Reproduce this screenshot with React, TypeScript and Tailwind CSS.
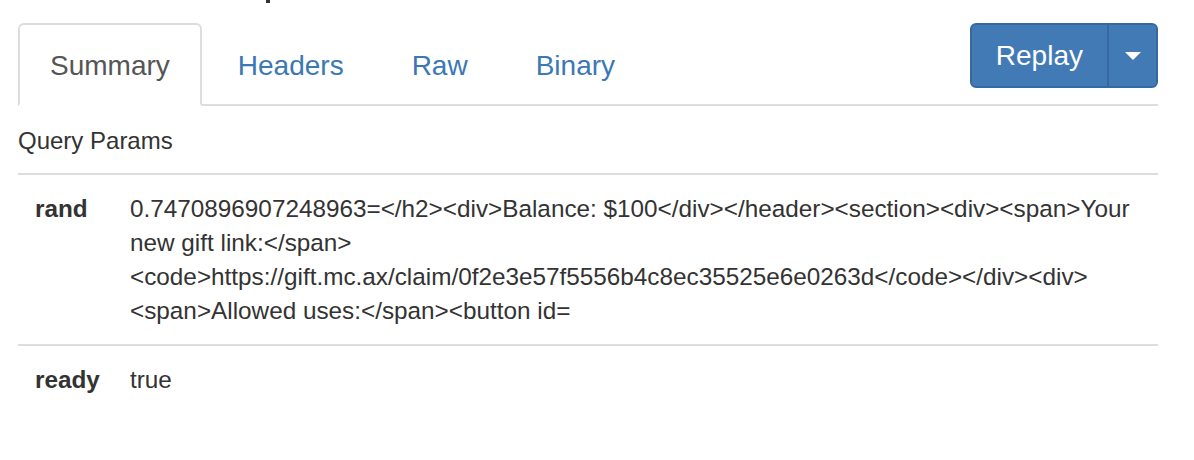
const tabs = ['Summary', 'Headers', 'Raw', 'Binary'];

const randLines = [
  '0.7470896907248963=</h2><div>Balance: $100</div></header><section><div><span>Your',
  'new gift link:</span>',
  '<code>https://gift.mc.ax/claim/0f2e3e57f5556b4c8ec35525e6e0263d</code></div><div>',
  '<span>Allowed uses:</span><button id=',
];

const App = () => {
  return (
    <div className="w-[1194px] h-[460px] bg-white pl-[18px] pr-[36px] text-[#333] font-['Liberation_Sans',Arial,sans-serif] overflow-hidden">
      {/* descender of the heading above, cut off by the viewport */}
      <div className="h-[3px] flex">
        <div className="ml-[248px] w-[4px] h-[3px] bg-[#333]" />
      </div>

      <div className="mt-[20px] flex items-start border-b-2 border-[#ddd]">
        <ul className="flex gap-[4px] -mb-[2px]">
          {tabs.map((t, i) => (
            <li
              key={t}
              className={
                i === 0
                  ? 'border-2 border-[#ddd] border-b-transparent bg-white rounded-t-[6px] px-[30px] pt-[21px] pb-[18px] text-[28px] leading-[40px] text-[#555]'
                  : 'border-2 border-transparent px-[30px] pt-[21px] pb-[18px] text-[28px] leading-[40px] text-[#3b78b5]'
              }
            >
              {t}
            </li>
          ))}
        </ul>
        <div className="ml-auto flex h-[65px] rounded-[6px] border-2 border-[#36699f] bg-[#427ab5] text-white overflow-hidden">
          <button className="px-[24px] text-[28px] leading-[40px]">Replay</button>
          <button className="w-[49px] border-l-2 border-[#36699f] flex items-center justify-center">
            <span className="w-0 h-0 border-t-[8px] border-t-white border-x-[8px] border-x-transparent" />
          </button>
        </div>
      </div>

      <div className="mt-[18px] pb-[15px] border-b-2 border-[#ddd] text-[24px] leading-[34px] font-medium">
        Query Params
      </div>

      <div className="flex border-b-2 border-[#ddd] pt-[17px] pb-[16px] text-[24.3px] leading-[34px]">
        <div className="w-[112px] pl-[17px] font-bold">rand</div>
        <div className="flex-1">
          {randLines.map((l) => (
            <div key={l} className="whitespace-nowrap">{l}</div>
          ))}
        </div>
      </div>
      <div className="flex pt-[17px] text-[24.3px] leading-[34px]">
        <div className="w-[112px] pl-[17px] font-bold">ready</div>
        <div className="flex-1">true</div>
      </div>
    </div>
  );
};

export default App;
